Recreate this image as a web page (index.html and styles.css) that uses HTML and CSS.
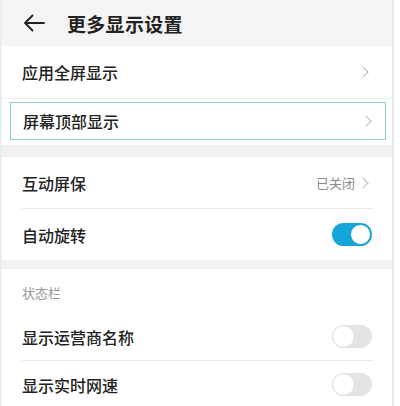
FILE: index.html
```html
<!DOCTYPE html>
<html lang="zh">
<head>
<meta charset="utf-8">
<link rel="stylesheet" href="styles.css">
</head>
<body>
<div class="page">
  <header class="header">
    <svg class="back" width="22" height="18" viewBox="0 0 22 18">
      <path d="M2 9 H21 M9.5 1.5 L2 9 L9.5 16.5" fill="none" stroke="#222" stroke-width="1.8" stroke-linecap="round" stroke-linejoin="round"/>
    </svg>
    <h1 class="title">更多显示设置</h1>
  </header>

  <div class="row row-first">
    <span class="label">应用全屏显示</span>
    <span class="chev"></span>
  </div>
  <div class="thin-sep"></div>
  <div class="row row-boxed">
    <span class="label">屏幕顶部显示</span>
    <span class="chev"></span>
  </div>

  <div class="band band-1"></div>

  <div class="row row-std">
    <span class="label">互动屏保</span>
    <span class="right"><span class="value">已关闭</span><span class="chev"></span></span>
  </div>
  <div class="divider"></div>
  <div class="row row-std">
    <span class="label">自动旋转</span>
    <span class="toggle on"><span class="knob"></span></span>
  </div>

  <div class="band band-2"></div>

  <div class="section">状态栏</div>
  <div class="row row-s">
    <span class="label">显示运营商名称</span>
    <span class="toggle"><span class="knob"></span></span>
  </div>
  <div class="divider"></div>
  <div class="row row-s">
    <span class="label">显示实时网速</span>
    <span class="toggle"><span class="knob"></span></span>
  </div>
</div>
</body>
</html>
```

FILE: styles.css
```css
* { box-sizing: border-box; }
html, body {
  margin: 0;
  padding: 0;
  background: #ffffff;
}
body {
  font-family: "Noto Sans CJK SC", "Noto Sans", sans-serif;
  color: #222;
  width: 400px;
  height: 406px;
  overflow: hidden;
}
.page {
  width: 394px;
  border-left: 2px solid #e4f1ea;
  border-right: 2px solid #dcebe3;
  min-height: 406px;
  background: #fff;
}
.header {
  height: 46px;
  background: #f4f4f4;
  display: flex;
  align-items: center;
  padding-left: 21px;
  gap: 22px;
}
.back { display: block; }
.title {
  margin: 0;
  font-size: 19px;
  font-weight: 700;
  color: #222;
  letter-spacing: 0.3px;
}
.row {
  display: flex;
  align-items: center;
  justify-content: space-between;
  padding: 0 22px 0 20px;
}
.label {
  font-size: 16px;
  color: #222;
  font-weight: 500;
}
.row-first { height: 52px; }
.thin-sep {
  height: 4px;
  border-top: 1px solid #e6f2ec;
}
.row-boxed {
  height: 38px;
  margin: 0 6px 0 8px;
  border: 1.5px solid #8ed2cd;
  padding: 0 12px 0 12px;
}
.band {
  background: #f3f2f2;
}
.band-1 { height: 12px; margin-top: 5px; background: #f3f0f0; }
.band-2 { height: 9px; }
.row-std { height: 51px; }
.row-s { height: 47px; }
.divider {
  height: 1px;
  background: #ebebeb;
  margin: 0 18px 0 20px;
}
.chev {
  display: inline-block;
  width: 8px;
  height: 8px;
  border-top: 1.4px solid #bdbdbd;
  border-right: 1.4px solid #bdbdbd;
  transform: rotate(45deg);
  margin-right: 3px;
}
.right {
  display: flex;
  align-items: center;
  gap: 4px;
}
.value {
  font-size: 13px;
  color: #8a8a8a;
}
.section {
  font-size: 13px;
  color: #999;
  padding: 14px 0 0 20px;
  height: 44px;
}
.toggle {
  width: 40px;
  height: 23px;
  border-radius: 12px;
  background: #e4e4e4;
  position: relative;
  display: inline-block;
  margin-right: -2px;
}
.toggle .knob {
  position: absolute;
  top: 1px;
  left: 1px;
  width: 21px;
  height: 21px;
  border-radius: 50%;
  background: #fff;
  box-shadow: 0 0 1px rgba(0,0,0,0.15);
}
.toggle.on { background: #14a6da; }
.toggle.on .knob {
  left: 18px;
  border: 1.5px solid #14a6da;
}
```
